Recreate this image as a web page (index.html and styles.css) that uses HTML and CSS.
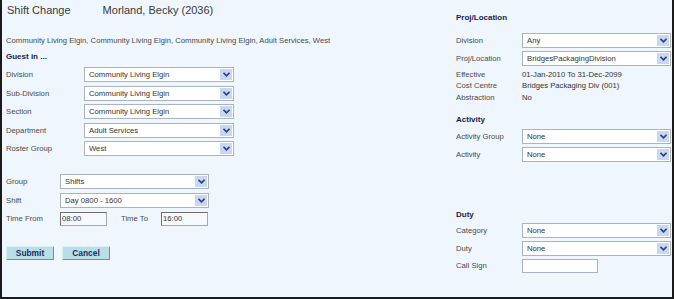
FILE: index.html
```html
<!DOCTYPE html>
<html lang="en">
<head>
    <meta charset="UTF-8">
    <title>Shift Change</title>
    <link rel="stylesheet" href="styles.css">
</head>
<body>
    <div class="frame">
        <div class="left">
            <div class="title">
                <span class="title-main">Shift Change</span>
                <span class="title-name">Morland, Becky (2036)</span>
            </div>
            <div class="crumb">Community Living Elgin, Community Living Elgin, Community Living Elgin, Adult Services, West</div>
            <div class="heading guest">Guest in ...</div>

            <div class="rows org">
                <div class="row"><span class="label">Division</span><div class="select"><span>Community Living Elgin</span><span class="arrow"><svg width="7" height="5" viewBox="0 0 7 5"><path d="M0.5 0.8 L3.5 3.8 L6.5 0.8" fill="none" stroke="#2a3f8a" stroke-width="1.6"/></svg></span></div></div>
                <div class="row"><span class="label">Sub-Division</span><div class="select"><span>Community Living Elgin</span><span class="arrow"><svg width="7" height="5" viewBox="0 0 7 5"><path d="M0.5 0.8 L3.5 3.8 L6.5 0.8" fill="none" stroke="#2a3f8a" stroke-width="1.6"/></svg></span></div></div>
                <div class="row"><span class="label">Section</span><div class="select"><span>Community Living Elgin</span><span class="arrow"><svg width="7" height="5" viewBox="0 0 7 5"><path d="M0.5 0.8 L3.5 3.8 L6.5 0.8" fill="none" stroke="#2a3f8a" stroke-width="1.6"/></svg></span></div></div>
                <div class="row"><span class="label">Department</span><div class="select"><span>Adult Services</span><span class="arrow"><svg width="7" height="5" viewBox="0 0 7 5"><path d="M0.5 0.8 L3.5 3.8 L6.5 0.8" fill="none" stroke="#2a3f8a" stroke-width="1.6"/></svg></span></div></div>
                <div class="row"><span class="label">Roster Group</span><div class="select"><span>West</span><span class="arrow"><svg width="7" height="5" viewBox="0 0 7 5"><path d="M0.5 0.8 L3.5 3.8 L6.5 0.8" fill="none" stroke="#2a3f8a" stroke-width="1.6"/></svg></span></div></div>
            </div>

            <div class="rows shift">
                <div class="row"><span class="label">Group</span><div class="select"><span>Shifts</span><span class="arrow"><svg width="7" height="5" viewBox="0 0 7 5"><path d="M0.5 0.8 L3.5 3.8 L6.5 0.8" fill="none" stroke="#2a3f8a" stroke-width="1.6"/></svg></span></div></div>
                <div class="row"><span class="label">Shift</span><div class="select"><span>Day 0800 - 1600</span><span class="arrow"><svg width="7" height="5" viewBox="0 0 7 5"><path d="M0.5 0.8 L3.5 3.8 L6.5 0.8" fill="none" stroke="#2a3f8a" stroke-width="1.6"/></svg></span></div></div>
                <div class="row"><span class="label">Time From</span><div class="textbox time">08:00</div><span class="label to">Time To</span><div class="textbox time">16:00</div></div>
            </div>

            <div class="buttons">
                <button class="btn">Submit</button>
                <button class="btn">Cancel</button>
            </div>
        </div>

        <div class="right">
            <div class="heading proj-head">Proj/Location</div>
            <div class="rows proj first">
                <div class="row"><span class="label">Division</span><div class="select"><span>Any</span><span class="arrow"><svg width="7" height="5" viewBox="0 0 7 5"><path d="M0.5 0.8 L3.5 3.8 L6.5 0.8" fill="none" stroke="#2a3f8a" stroke-width="1.6"/></svg></span></div></div>
                <div class="row"><span class="label">Proj/Location</span><div class="select"><span>BridgesPackagingDivision</span><span class="arrow"><svg width="7" height="5" viewBox="0 0 7 5"><path d="M0.5 0.8 L3.5 3.8 L6.5 0.8" fill="none" stroke="#2a3f8a" stroke-width="1.6"/></svg></span></div></div>
            </div>
            <div class="info">
                <div class="info-row"><span class="label">Effective</span><span class="value">01-Jan-2010 To 31-Dec-2099</span></div>
                <div class="info-row"><span class="label">Cost Centre</span><span class="value">Bridges Packaging Div (001)</span></div>
                <div class="info-row"><span class="label">Abstraction</span><span class="value">No</span></div>
            </div>

            <div class="heading activity">Activity</div>
            <div class="rows proj">
                <div class="row"><span class="label">Activity Group</span><div class="select"><span>None</span><span class="arrow"><svg width="7" height="5" viewBox="0 0 7 5"><path d="M0.5 0.8 L3.5 3.8 L6.5 0.8" fill="none" stroke="#2a3f8a" stroke-width="1.6"/></svg></span></div></div>
                <div class="row"><span class="label">Activity</span><div class="select"><span>None</span><span class="arrow"><svg width="7" height="5" viewBox="0 0 7 5"><path d="M0.5 0.8 L3.5 3.8 L6.5 0.8" fill="none" stroke="#2a3f8a" stroke-width="1.6"/></svg></span></div></div>
            </div>

            <div class="heading duty">Duty</div>
            <div class="rows proj duty-rows">
                <div class="row"><span class="label">Category</span><div class="select"><span>None</span><span class="arrow"><svg width="7" height="5" viewBox="0 0 7 5"><path d="M0.5 0.8 L3.5 3.8 L6.5 0.8" fill="none" stroke="#2a3f8a" stroke-width="1.6"/></svg></span></div></div>
                <div class="row"><span class="label">Duty</span><div class="select"><span>None</span><span class="arrow"><svg width="7" height="5" viewBox="0 0 7 5"><path d="M0.5 0.8 L3.5 3.8 L6.5 0.8" fill="none" stroke="#2a3f8a" stroke-width="1.6"/></svg></span></div></div>
                <div class="row"><span class="label">Call Sign</span><div class="textbox callsign"></div></div>
            </div>
        </div>
    </div>
</body>
</html>
```

FILE: styles.css
```css
html, body {
    margin: 0;
    padding: 0;
}
body {
    font-family: "Liberation Sans", Arial, sans-serif;
    font-size: 7.7px;
    color: #4a4a4a;
    background: #ffffff;
}
.frame {
    display: flex;
    width: 670px;
    height: 297px;
    background: #eff6fd;
    border-left: 2px solid #1a1a1a;
    border-right: 2px solid #1a1a1a;
    border-bottom: 2px solid #1a1a1a;
}
.left {
    width: 450px;
    padding-left: 4px;
}
.right {
    flex: 1;
}
.title {
    display: flex;
    font-size: 11px;
    line-height: 14px;
    padding-top: 3px;
    padding-left: 1px;
    color: #3a3a3a;
}
.title-name {
    margin-left: 32px;
}
.crumb {
    line-height: 10px;
    margin-top: 19px;
}
.heading {
    font-weight: bold;
    font-size: 8px;
    line-height: 10px;
    color: #1c1c4e;
}
.guest {
    margin-top: 6px;
}
.rows {
    display: flex;
    flex-direction: column;
    gap: 3.5px;
}
.row {
    display: flex;
    align-items: center;
    height: 15px;
}
.label {
    flex: none;
}
.org {
    margin-top: 5px;
}
.org .label {
    width: 78px;
}
.org .select {
    width: 148px;
}
.shift {
    margin-top: 18px;
}
.shift .label {
    width: 54px;
}
.shift .select {
    width: 147px;
}
.select {
    display: flex;
    align-items: center;
    justify-content: space-between;
    height: 13px;
    background: #ffffff;
    border: 1px solid #a9b3c2;
    color: #333333;
}
.select span:first-child {
    padding-left: 4px;
}
.arrow {
    display: flex;
    align-items: center;
    justify-content: center;
    width: 12px;
    height: 11px;
    margin-right: 1px;
    background: #c9d7ef;
}
.textbox {
    height: 12px;
    line-height: 12px;
    background: #f7f9fc;
    border: 1px solid #a0a8b2;
    border-top-color: #6e6e6e;
    border-left-color: #6e6e6e;
    color: #333333;
    padding-left: 1px;
}
.time {
    width: 44px;
}
.shift .to {
    width: 40px;
    margin-left: 14px;
}
.buttons {
    display: flex;
    gap: 8px;
    margin-top: 20px;
}
.btn {
    width: 48px;
    height: 14px;
    padding: 0;
    font-family: "Liberation Sans", Arial, sans-serif;
    font-size: 8.4px;
    font-weight: bold;
    color: #1c2a6b;
    background: #b8dfe6;
    border: 1px solid #d8eef2;
    border-right-color: #7a8f96;
    border-bottom-color: #7a8f96;
}
.proj-head {
    margin-top: 13px;
}
.proj {
    margin-top: 3.5px;
}
.proj.first {
    margin-top: 9.5px;
}
.proj .label {
    width: 66px;
}
.proj .select {
    width: 147px;
}
.info {
    margin-top: 2.5px;
}
.info-row {
    display: flex;
    line-height: 11.5px;
}
.info .label {
    width: 66px;
}
.value {
    color: #333333;
}
.activity {
    margin-top: 12px;
}
.duty {
    margin-top: 47.5px;
}
.duty-rows {
    gap: 2.5px;
}
.callsign {
    width: 73px;
    background: #ffffff;
    border: 1px solid #a9b3c2;
}
```
